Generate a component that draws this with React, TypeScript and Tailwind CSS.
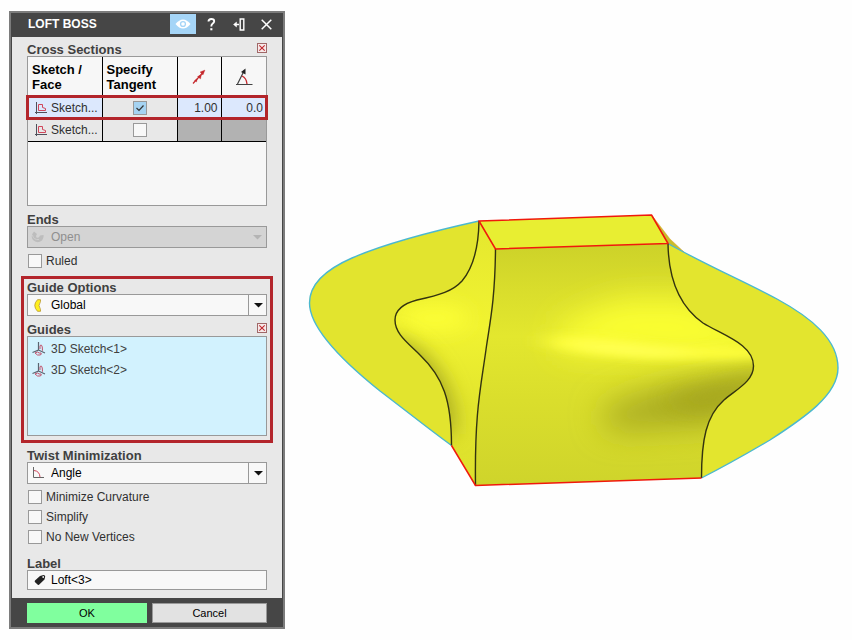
import type { ReactNode } from 'react'

const ClearButton = ({ label }: { label: string }) => (
    <button aria-label={label} className="h-[10px] w-[10px] shrink-0">
        <svg viewBox="0 0 10 10" className="block h-full w-full">
            <rect x="0.5" y="0.5" width="9" height="9" fill="#f7e9e9" stroke="#a06868" />
            <path d="M2.3 2.3L7.7 7.7M7.7 2.3L2.3 7.7" stroke="#c0282d" strokeWidth="1.1" />
        </svg>
    </button>
)

const SketchIcon = () => (
    <svg viewBox="0 0 12 12" className="h-3 w-3 shrink-0" fill="none">
        <path d="M1.5 0V12M0 10.5H12" stroke="#50505a" />
        <path d="M3.5 2.5H7.5V5.5L10.5 6.5V8.5H3.5Z" stroke="#d0455a" />
    </svg>
)

const Sketch3DIcon = () => (
    <svg viewBox="0 0 14 14" className="h-[14px] w-[14px] shrink-0" fill="none">
        <path d="M6.5 0V8L0.5 10.5M6.5 8L13 11" stroke="#5b6470" strokeWidth="1.2" />
        <path d="M8 7V4Q8.500 2.500 9.500 3.200Q10.500 4 10.500 8.700" stroke="#c2506a" />
        <path d="M3 11L5.500 10Q7 11.500 9 11Q10 12.500 8 13H5.500Z" stroke="#c2506a" />
    </svg>
)

const GlobalIcon = () => (
    <svg viewBox="0 0 8 13" className="h-[13px] w-2" fill="#ffef1f" stroke="#b8952a" strokeWidth="0.800">
        <path d="M3.500 0.700H6.500V2.500Q3.500 6.500 6.500 10.500V12.300H3.500Q-2 6.500 3.500 0.700Z" />
    </svg>
)

const AngleIcon = () => (
    <svg viewBox="0 0 12 12" className="h-3 w-3" fill="none">
        <path d="M1.500 0V10.500H12" stroke="#666" />
        <path d="M2 3.500Q7.500 4 8 10" stroke="#d0455a" />
    </svg>
)

const OpenIcon = () => (
    <svg viewBox="0 0 14 14" className="h-[14px] w-[14px]">
        <path d="M3 1.500Q-1 6 2 10Q6 14 11 10.500Q13 8 12.500 5L9 5.500Q8 8.500 5.500 7.500Q4.500 6 6 4Z" fill="#bdbdbd" />
        <path d="M1.500 5Q2 10 8 9.500" stroke="#cfcfcf" fill="none" />
    </svg>
)

const TagIcon = () => (
    <svg viewBox="0 0 12 12" className="h-3 w-3">
        <path d="M6 2L9.500 1Q11.300 1 11.200 2.500L10.500 5.500L5 10.800Q4.200 11.300 3.500 10.500L0.900 8Q0.400 7.300 1 6.600Z" fill="#222" />
        <circle cx="9.200" cy="3" r="0.900" fill="#f7f7f7" />
    </svg>
)

const Heading = ({ children, htmlFor }: { children: ReactNode; htmlFor?: string }) => (
    <label htmlFor={htmlFor} className="block text-[13px] leading-[13px] font-bold text-[#404040]">
        {children}
    </label>
)

const Picker = ({ id, value, icon, disabled }: { id: string; value: string; icon: ReactNode; disabled?: boolean }) => (
    <div className="relative h-[22px]">
        <select
            id={id}
            disabled={disabled}
            className="block h-full w-full appearance-none border border-[#999] bg-[#f8f8f8] pl-[23px] text-[12px] text-black disabled:bg-[#d4d4d4] disabled:text-[#8f8f8f] disabled:opacity-100"
        >
            <option>{value}</option>
        </select>
        <span className="pointer-events-none absolute inset-y-0 left-[3px] flex w-4 items-center justify-center">{icon}</span>
        <span
            className={
                disabled
                    ? 'pointer-events-none absolute inset-y-0 right-0 flex w-[19px] items-center justify-center'
                    : 'pointer-events-none absolute inset-y-0 right-0 flex w-[19px] items-center justify-center border-l border-[#999]'
            }
        >
            <svg viewBox="0 0 9 5" className="h-[5px] w-[9px]" fill={disabled ? '#b4b4b4' : '#111'}>
                <path d="M0 0H9L4.500 4.500Z" />
            </svg>
        </span>
    </div>
)

const Option = ({ label }: { label: string }) => (
    <label className="flex h-[14px] items-center gap-1 pl-px text-[12px] text-[#303030]">
        <input type="checkbox" className="block h-[14px] w-[14px] appearance-none border border-[#999] bg-[#f8f8f8]" />
        {label}
    </label>
)

const rows = [
    { name: 'Sketch...', tangent: true, magnitude: '1.00', angle: '0.0' },
    { name: 'Sketch...', tangent: false, magnitude: '', angle: '' },
]

const CrossSections = () => (
    <div className="h-[150px] border border-[#999] bg-[#f7f7f7]">
        <table className="w-full table-fixed border-collapse text-[12px] text-[#303030]">
            <thead>
                <tr className="h-[39px] text-left text-[13px] leading-[15px] text-black">
                    <th className="w-[74px] border-r border-black pl-1">Sketch /<br />Face</th>
                    <th className="w-[75px] border-r border-black pl-1">Specify<br />Tangent</th>
                    <th className="w-[44px] border-r border-black" aria-label="Magnitude">
                        <svg viewBox="0 0 14 16" className="mx-auto h-4 w-[14px]" fill="#c5282d" stroke="#c5282d">
                            <path d="M1 14.500L11 3.500" strokeWidth="1.200" />
                            <path d="M13 1L8 3L11 6ZM9.500 5.500L5.500 7.500L8.500 10ZM5.500 9.500L2.500 11.500L4.500 13Z" strokeWidth="0.300" />
                        </svg>
                    </th>
                    <th aria-label="Angle">
                        <svg viewBox="0 0 18 18" className="mx-auto h-[18px] w-[18px]" fill="none">
                            <path d="M1 16.500H17.500M2.500 16L8.500 4" stroke="#444" strokeWidth="1.200" />
                            <path d="M10.500 0.500L6 4L10.500 6.500Z" fill="#222" />
                            <path d="M7 8Q11.500 10 12 16" stroke="#c5282d" strokeWidth="1.300" />
                        </svg>
                    </th>
                </tr>
            </thead>
            <tbody>
                {rows.map((row, i) => (
                    <tr key={i} className={row.tangent ? 'relative h-[23px] bg-[#dce8fd]' : 'h-[22px] border-b border-black bg-[#e8e8e8]'}>
                        <td className="border-r border-black">
                            <div className="flex items-center gap-1 pl-[7px]">
                                <SketchIcon />
                                {row.name}
                            </div>
                            {/* marks the selected row */}
                            {row.tangent && <span className="pointer-events-none absolute -inset-x-[2px] -inset-y-px border-3 border-[#b3252b]" />}
                        </td>
                        <td className="border-r border-black bg-[#e8e8e8]">
                            <div className="relative mx-auto h-[14px] w-[14px]">
                                <input
                                    type="checkbox"
                                    aria-label="Specify Tangent"
                                    defaultChecked={row.tangent}
                                    className="block h-[14px] w-[14px] appearance-none border border-[#999] bg-[#f8f8f8] checked:bg-[#a5d3f2]"
                                />
                                {row.tangent && (
                                    <svg viewBox="0 0 14 14" className="pointer-events-none absolute inset-0" fill="none">
                                        <path d="M3.500 7L6 9.500L10.500 4.500" stroke="#333" strokeWidth="1.200" />
                                    </svg>
                                )}
                            </div>
                        </td>
                        <td className={row.tangent ? 'border-r border-black pr-[3px] text-right' : 'border-r border-black bg-[#b2b2b2]'}>{row.magnitude}</td>
                        <td className={row.tangent ? 'pr-[3px] text-right' : 'bg-[#b2b2b2]'}>{row.angle}</td>
                    </tr>
                ))}
            </tbody>
        </table>
    </div>
)

const Panel = () => (
    <aside className="mt-[11px] ml-[9px] w-[276px] shrink-0 border-2 border-[#7c7c7c] bg-[#464646]">
        <header className="flex h-6 items-start pt-px pr-[2px] pl-[17px] text-white">
            <h1 className="flex-1 text-[12px] leading-5 font-bold">LOFT BOSS</h1>
            <button aria-label="Preview" className="flex h-5 w-[26px] items-center justify-center bg-[#a5d5f7]">
                <svg viewBox="0 0 16 10" className="h-[10px] w-4">
                    <path d="M0.500 5Q8 -4 15.500 5Q8 14 0.500 5Z" fill="#fff" />
                    <circle cx="8" cy="5" r="3.100" fill="#a5d5f7" />
                    <circle cx="8" cy="5" r="1.800" fill="#fff" />
                </svg>
            </button>
            <button aria-label="Help" className="flex h-5 w-[30px] items-center justify-center">
                <svg viewBox="0 0 9 13" className="h-[13px] w-[9px]" fill="none">
                    <path d="M1.500 3.500Q1.500 1 4.300 1Q7.200 1 7.200 3.300Q7.200 4.700 5.500 5.800Q4.300 6.700 4.300 8.500" stroke="#fff" strokeWidth="1.900" />
                    <path d="M3.300 10.200H5.400V12.300H3.300Z" fill="#fff" />
                </svg>
            </button>
            <button aria-label="Dock" className="flex h-5 w-[26px] items-center justify-center">
                <svg viewBox="0 0 12 13" className="h-[13px] w-3" fill="none" stroke="#fff">
                    <path d="M7.200 1H10.800V12H7.200Z" strokeWidth="1.400" />
                    <path d="M6 6.500H2" strokeWidth="1.500" />
                    <path d="M0.500 6.500L3.500 4V9Z" fill="#fff" strokeWidth="0.500" />
                </svg>
            </button>
            <button aria-label="Close" className="flex h-5 w-[29px] items-center justify-center">
                <svg viewBox="0 0 11 11" className="h-[11px] w-[11px]" stroke="#fff" strokeWidth="1.500">
                    <path d="M0.700 0.700L10.300 10.300M10.300 0.700L0.700 10.300" />
                </svg>
            </button>
        </header>

        <main className="mx-px bg-[#e8e8e8] px-[15px] pt-[6px] pb-2">
            <div className="flex justify-between">
                <h2 className="text-[13px] leading-[13px] font-bold text-[#404040]">Cross Sections</h2>
                <ClearButton label="Clear cross sections" />
            </div>
            <CrossSections />

            <div className="mt-[7px]">
                <Heading htmlFor="ends">Ends</Heading>
                <Picker id="ends" value="Open" icon={<OpenIcon />} disabled />
            </div>
            <div className="mt-[6px]">
                <Option label="Ruled" />
            </div>

            <section className="-mx-[6px] mt-2 border-3 border-[#b3252b] px-[3px] pt-[2px] pb-1">
                <Heading htmlFor="guide-options">Guide Options</Heading>
                <Picker id="guide-options" value="Global" icon={<GlobalIcon />} />
                <div className="mt-[7px] flex justify-between">
                    <h2 className="text-[13px] leading-[13px] font-bold text-[#404040]">Guides</h2>
                    <ClearButton label="Clear guides" />
                </div>
                <ul className="h-[100px] border border-[#999] bg-[#d2f2fe] pt-px pl-1 text-[12px] text-[#404040]">
                    <li className="flex h-[21px] items-center gap-[5px]"><Sketch3DIcon />3D Sketch&lt;1&gt;</li>
                    <li className="flex h-[21px] items-center gap-[5px]"><Sketch3DIcon />3D Sketch&lt;2&gt;</li>
                </ul>
            </section>

            <div className="mt-[6px]">
                <Heading htmlFor="twist">Twist Minimization</Heading>
                <Picker id="twist" value="Angle" icon={<AngleIcon />} />
            </div>
            <div className="mt-[6px] flex flex-col gap-[6px]">
                <Option label="Minimize Curvature" />
                <Option label="Simplify" />
                <Option label="No New Vertices" />
            </div>

            <div className="mt-[13px]">
                <Heading htmlFor="label">Label</Heading>
                <div className="relative h-5">
                    <input id="label" defaultValue="Loft<3>" className="block h-full w-full border border-[#999] bg-[#f8f8f8] pl-[23px] text-[12px] text-black" />
                    <span className="pointer-events-none absolute inset-y-0 left-[7px] flex w-4 items-center"><TagIcon /></span>
                </div>
            </div>
        </main>

        <footer className="flex gap-[5px] px-4 pt-[5px] pb-1 text-[11px] text-black">
            <button className="h-5 flex-1 bg-[#80ff9e]">OK</button>
            <button className="h-5 w-[115px] border border-[#999] bg-[#e2e2e2]">Cancel</button>
        </footer>
    </aside>
)

const FRONT = 'M495.500 249L668 243.500C668.500 280 679 306 703 323C722 335 753.500 344 753.500 366C753.500 381 737 389 724 400C706 416 701.500 440 701.500 478L475.500 485.500C474.500 410 481 387 486.500 346C490 322 495 300 495.500 249Z'
const SIDE = 'M479 221C478.500 250 473 268 462 281C453 291 440 295 417 300C402 304 395 310 395 320C395 334 408 343 420 355C443 377 451.500 400 451.500 445.500L475.500 485.500C474.500 410 481 387 486.500 346C490 322 495 300 495.500 249Z'

const Model = () => (
    <svg viewBox="285 0 567 640" className="block h-auto w-full" fill="none" role="img" aria-label="Loft model">
        <defs>
            <clipPath id="front"><path d={FRONT} /></clipPath>
            <clipPath id="side"><path d={SIDE} /></clipPath>
            <filter id="blur5" x="-50%" y="-200%" width="200%" height="500%"><feGaussianBlur stdDeviation="14 5" /></filter>
            <filter id="blur10" x="-50%" y="-100%" width="200%" height="300%"><feGaussianBlur stdDeviation="10" /></filter>
            <filter id="blur16" x="-50%" y="-100%" width="200%" height="300%"><feGaussianBlur stdDeviation="16" /></filter>
            <linearGradient id="frontFill" x1="0" y1="245" x2="0" y2="485" gradientUnits="userSpaceOnUse">
                <stop offset="0" stopColor="#cdd229" />
                <stop offset="0.200" stopColor="#dade2c" />
                <stop offset="0.380" stopColor="#e3e72e" />
                <stop offset="0.650" stopColor="#dade2c" />
                <stop offset="1" stopColor="#cfd42b" />
            </linearGradient>
            <linearGradient id="sideFill" x1="0" y1="221" x2="0" y2="485" gradientUnits="userSpaceOnUse">
                <stop offset="0" stopColor="#e4e72e" />
                <stop offset="0.400" stopColor="#f1f331" />
                <stop offset="0.700" stopColor="#e2e52d" />
                <stop offset="1" stopColor="#dde02c" />
            </linearGradient>
        </defs>

        {/* side flanges */}
        <path d="M479 221C420 234 375 248 352 258C320 272 309.500 287 309.500 303C309.500 330 350 367 380 391C405 410 430 430 451.500 445.500L475 400L495 249Z" fill="#e2e42e" />
        <path d="M668 243.500C700 262 745 282 777 299C812 318 838 340 838 368C838 395 804 418 770 440C748 453 725 466 701.500 478L650 400Z" fill="#e3e52e" />
        <path d="M652 215.500L670 239L684 252L668 243.500Z" fill="#c9bd2b" stroke="#e0a02c" strokeWidth="0.500" />

        <path d={SIDE} fill="url(#sideFill)" />
        <g clipPath="url(#side)">
            <ellipse cx="435" cy="318" rx="34" ry="12" fill="#fdff35" filter="url(#blur10)" />
            <path d="M395 340L420 355C443 377 451.500 400 451.500 430L440 430L390 360Z" fill="#a9ab22" stroke="#a9ab22" strokeWidth="8" filter="url(#blur10)" />
        </g>

        <path d={FRONT} fill="url(#frontFill)" />
        <g clipPath="url(#front)">
            <path d="M560 325L620 300L690 300L770 340V355L560 350Z" fill="#fbff33" filter="url(#blur16)" />
            <path d="M600 410Q660 385 720 377L790 368V400L710 425L610 430Z" fill="#a6a822" filter="url(#blur16)" />
            <path d="M660 400L720 384L770 374L735 398L700 408Z" fill="#a3a31f" filter="url(#blur10)" opacity="0.700" />
            <path d="M550 336Q610 334 650 345L770 348V357Q620 362 550 346Z" fill="#ffff3c" filter="url(#blur5)" />
            <path d="M570 344Q610 344 690 354Q620 356 570 344Z" fill="#ffff58" stroke="#ffff58" strokeWidth="3" filter="url(#blur5)" />
        </g>

        <path d="M479 221L651.500 215L668 243.500L495.500 249Z" fill="#e8ee32" />

        <g stroke="#4bb8cf" strokeWidth="1.400">
            <path d="M479 221C420 234 375 248 352 258C320 272 309.500 287 309.500 303C309.500 330 350 367 380 391C405 410 430 430 451.500 445.500" />
            <path d="M668 243.500C700 262 745 282 777 299C812 318 838 340 838 368C838 395 804 418 770 440C748 453 725 466 701.500 478" />
        </g>
        <g stroke="#33330f" strokeWidth="1.400">
            <path d="M479 221C478.500 250 473 268 462 281C453 291 440 295 417 300C402 304 395 310 395 320C395 334 408 343 420 355C443 377 451.500 400 451.500 445.500" />
            <path d="M495.500 249C495 300 490 322 486.500 346C481 387 474.500 410 475.500 485.500" />
            <path d="M668 243.500C668.500 280 679 306 703 323C722 335 753.500 344 753.500 366C753.500 381 737 389 724 400C706 416 701.500 440 701.500 478" />
        </g>
        <g stroke="#f0190c" strokeWidth="1.500" strokeLinejoin="round">
            <path d="M479 221L651.500 215L668 243.500L495.500 249Z" />
            <path d="M451.500 445.500L475.500 485.500L701.500 478" />
        </g>
    </svg>
)

const App = () => {
    return (
        <div className="flex min-h-screen items-start bg-[#fefefe] font-['Liberation_Sans',Arial,sans-serif]">
            <Panel />
            <div className="min-w-0 flex-1">
                <Model />
            </div>
        </div>
    )
}

export default App
